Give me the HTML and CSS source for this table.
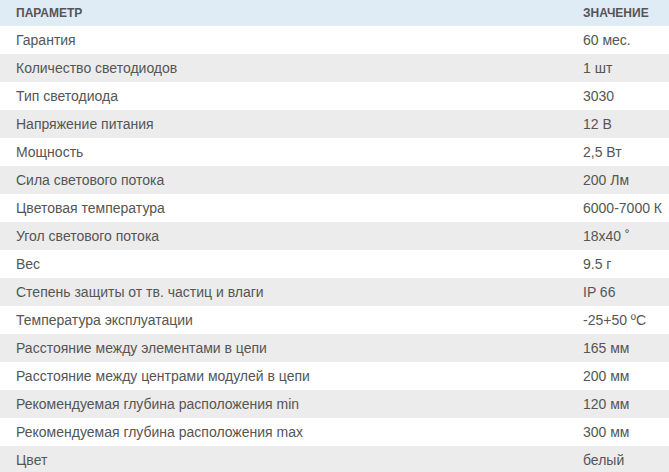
FILE: index.html
```html
<!DOCTYPE html>
<html lang="ru">
<head>
<meta charset="utf-8">
<title>Характеристики</title>
<link rel="stylesheet" href="styles.css">
</head>
<body>
<table class="specs">
  <thead>
    <tr class="head"><th class="c1">Параметр</th><th class="c2">Значение</th></tr>
  </thead>
  <tbody>
    <tr><td>Гарантия</td><td>60 мес.</td></tr>
    <tr><td>Количество светодиодов</td><td>1 шт</td></tr>
    <tr><td>Тип светодиода</td><td>3030</td></tr>
    <tr><td>Напряжение питания</td><td>12 В</td></tr>
    <tr><td>Мощность</td><td>2,5 Вт</td></tr>
    <tr><td>Сила светового потока</td><td>200 Лм</td></tr>
    <tr><td>Цветовая температура</td><td>6000-7000 К</td></tr>
    <tr><td>Угол светового потока</td><td>18x40 ˚</td></tr>
    <tr><td>Вес</td><td>9.5 г</td></tr>
    <tr><td>Степень защиты от тв. частиц и влаги</td><td>IP 66</td></tr>
    <tr><td>Температура эксплуатации</td><td>-25+50 ºC</td></tr>
    <tr><td>Расстояние между элементами в цепи</td><td>165 мм</td></tr>
    <tr><td>Расстояние между центрами модулей в цепи</td><td>200 мм</td></tr>
    <tr><td>Рекомендуемая глубина расположения min</td><td>120 мм</td></tr>
    <tr><td>Рекомендуемая глубина расположения max</td><td>300 мм</td></tr>
    <tr><td>Цвет</td><td>белый</td></tr>
  </tbody>
</table>
</body>
</html>
```
FILE: styles.css
```css
html, body {
  margin: 0;
  padding: 0;
  background: #ffffff;
}
body {
  font-family: "Liberation Sans", Arial, sans-serif;
  color: #555555;
}
.specs {
  width: 669px;
  border-collapse: collapse;
  table-layout: fixed;
}
.specs th {
  height: 26px;
  padding: 0 0 0 16px;
  background: #dfebf5;
  font-size: 12px;
  font-weight: bold;
  text-transform: uppercase;
  text-align: left;
  color: #555555;
  white-space: nowrap;
}
.specs .c1 { width: 551px; }
.specs td {
  height: 28px;
  padding: 0 0 0 16px;
  font-size: 14px;
  vertical-align: middle;
  white-space: nowrap;
}
.specs tbody tr:nth-child(even) td {
  background: #ececec;
}
```
